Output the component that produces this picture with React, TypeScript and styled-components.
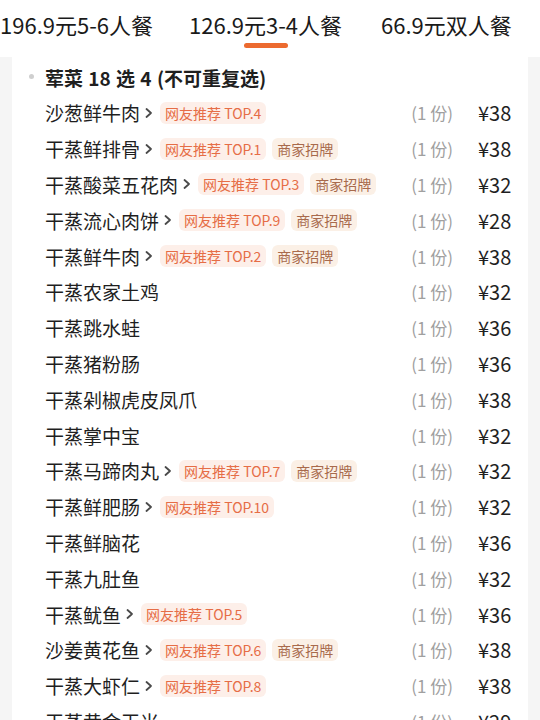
import React from "react";
import styled, { createGlobalStyle } from "styled-components";

const GlobalStyle = createGlobalStyle`
  html, body {
    margin: 0;
    padding: 0;
    background: #f5f5f5;
    font-family: "Noto Sans CJK SC", "Noto Sans", sans-serif;
  }
  * { box-sizing: border-box; }
`;

const Page = styled.div`
  width: 540px;
  height: 720px;
  overflow: hidden;
  background: #f5f5f5;
`;

const TabBar = styled.div`
  height: 57px;
  background: #fff;
  overflow: hidden;
`;

const TabStrip = styled.div`
  display: flex;
  margin-left: -18px;
  white-space: nowrap;
`;

const Tab = styled.div`
  position: relative;
  flex: none;
  padding: 8px 18px 0;
  height: 57px;
  font-size: 22px;
  line-height: 32px;
  color: #1a1a1a;
  &:last-child {
    padding-left: 21px;
  }
`;

const Underline = styled.div`
  position: absolute;
  left: 50%;
  top: 43px;
  width: 44px;
  margin-left: -22px;
  height: 5px;
  border-radius: 3px;
  background: #ec6a2f;
`;

const Card = styled.div`
  margin: 0 12px;
  background: #fff;
  padding: 2px 16px 0 33px;
`;

const GroupTitle = styled.div`
  position: relative;
  display: flex;
  align-items: center;
  height: 36px;
  font-size: 19px;
  font-weight: 700;
  word-spacing: 1px;
  color: #1f1f1f;
`;

const Dot = styled.span`
  position: absolute;
  left: -16px;
  top: 50%;
  width: 5px;
  height: 5px;
  margin-top: -3px;
  border-radius: 50%;
  background: #cfcfcf;
`;

const Row = styled.div`
  display: flex;
  align-items: center;
  height: 35.8px;
`;

const Name = styled.span`
  font-size: 19px;
  color: #1f1f1f;
  white-space: nowrap;
`;

const Chevron = styled.svg`
  flex: none;
  margin-left: 5px;
  width: 8px;
  height: 12px;
`;

const Tag = styled.span<{ kind: "hot" | "shop" }>`
  flex: none;
  margin-left: ${({ kind }) => (kind === "hot" ? "7px" : "6px")};
  padding: 0 5px;
  height: 22px;
  line-height: 22px;
  border-radius: 6px;
  font-size: 14px;
  white-space: nowrap;
  color: ${({ kind }) => (kind === "hot" ? "#e66d46" : "#a86a4c")};
  background: ${({ kind }) => (kind === "hot" ? "#fdefe9" : "#fbf0e6")};
`;

const Spacer = styled.span`
  flex: 1;
`;

const Qty = styled.span`
  font-size: 17px;
  color: #a0a0a0;
  margin-right: 25px;
  white-space: nowrap;
`;

const Price = styled.span`
  font-size: 20px;
  color: #1f1f1f;
  min-width: 34px;
`;

type Dish = { name: string; top?: number; shop?: boolean; price: number };

const dishes: Dish[] = [
  { name: "沙葱鲜牛肉", top: 4, price: 38 },
  { name: "干蒸鲜排骨", top: 1, shop: true, price: 38 },
  { name: "干蒸酸菜五花肉", top: 3, shop: true, price: 32 },
  { name: "干蒸流心肉饼", top: 9, shop: true, price: 28 },
  { name: "干蒸鲜牛肉", top: 2, shop: true, price: 38 },
  { name: "干蒸农家土鸡", price: 32 },
  { name: "干蒸跳水蛙", price: 36 },
  { name: "干蒸猪粉肠", price: 36 },
  { name: "干蒸剁椒虎皮凤爪", price: 38 },
  { name: "干蒸掌中宝", price: 32 },
  { name: "干蒸马蹄肉丸", top: 7, shop: true, price: 32 },
  { name: "干蒸鲜肥肠", top: 10, price: 32 },
  { name: "干蒸鲜脑花", price: 36 },
  { name: "干蒸九肚鱼", price: 32 },
  { name: "干蒸鱿鱼", top: 5, price: 36 },
  { name: "沙姜黄花鱼", top: 6, shop: true, price: 38 },
  { name: "干蒸大虾仁", top: 8, price: 38 },
  { name: "干蒸黄金玉米", price: 29 },
];

const tabs = ["196.9元5-6人餐", "126.9元3-4人餐", "66.9元双人餐"];

export default function App() {
  return (
    <Page>
      <GlobalStyle />
      <TabBar>
        <TabStrip>
          {tabs.map((t, i) => (
            <Tab key={t}>
              {t}
              {i === 1 && <Underline />}
            </Tab>
          ))}
        </TabStrip>
      </TabBar>
      <Card>
        <GroupTitle>
          <Dot />
          荤菜 18 选 4 (不可重复选)
        </GroupTitle>
        {dishes.map((d) => (
          <Row key={d.name}>
            <Name>{d.name}</Name>
            {d.top !== undefined && (
              <>
                <Chevron viewBox="0 0 8 12">
                  <path
                    d="M1.5 2 L6 6 L1.5 10"
                    fill="none"
                    stroke="#4a4a4a"
                    strokeWidth="1.8"
                    strokeLinecap="round"
                    strokeLinejoin="round"
                  />
                </Chevron>
                <Tag kind="hot">网友推荐 TOP.{d.top}</Tag>
              </>
            )}
            {d.shop && <Tag kind="shop">商家招牌</Tag>}
            <Spacer />
            <Qty>(1 份)</Qty>
            <Price>¥{d.price}</Price>
          </Row>
        ))}
      </Card>
    </Page>
  );
}
